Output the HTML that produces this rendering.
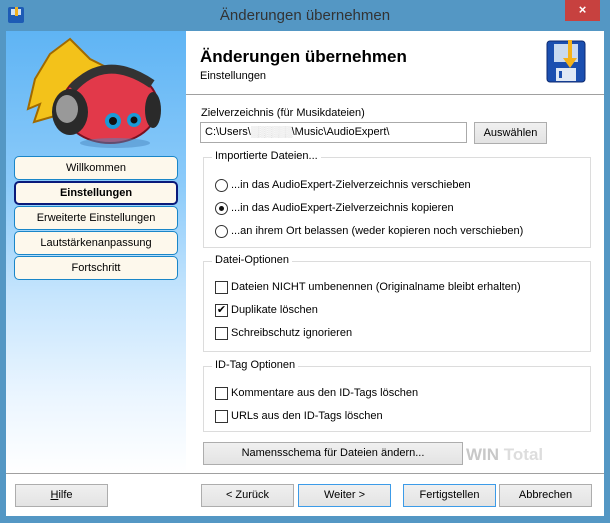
<!DOCTYPE html>
<html><head><meta charset="utf-8"><style>
*{margin:0;padding:0;box-sizing:border-box}
body{width:610px;height:523px;overflow:hidden;background:#5497c4;font-family:"Liberation Sans",sans-serif;font-size:11px;color:#000;position:relative}
.a{position:absolute}
.btn{position:absolute;background:linear-gradient(#f0f0f0,#e3e3e3);border:1px solid #adadad;text-align:center;font-size:11px;line-height:20px}
.nav{position:absolute;left:14px;width:164px;height:24px;background:#fdf8ec;border:1px solid #1a86c8;border-radius:5px;text-align:center;line-height:22px;font-size:11px}
.grp{position:absolute;left:203px;width:388px;border:1px solid #dcdcdc}
.grp .t{position:absolute;left:8px;top:-8px;background:#fff;padding:0 3px}
.rb{position:absolute;width:13px;height:13px;border:1px solid #333;border-radius:50%;background:#fff}
.cb{position:absolute;width:13px;height:13px;border:1px solid #333;background:#fff}
.lab{position:absolute;white-space:nowrap}
</style></head><body>
<div class="a" style="left:8px;top:7px;width:16px;height:16px;background:#1d5bb5;border-radius:2px"><div class="a" style="left:3px;top:2px;width:10px;height:6px;background:#cfe0f5"></div><div class="a" style="left:7px;top:0;width:3px;height:9px;background:#f0b020"></div></div>
<div class="a" style="left:0;top:7px;width:610px;text-align:center;font-size:15px;color:#333">Änderungen übernehmen</div>
<div class="a" style="left:565px;top:0;width:35px;height:21px;background:#c7413f;color:#fff;text-align:center;font-size:13px;line-height:20px;font-weight:bold">×</div>
<div class="a" style="left:6px;top:31px;width:598px;height:485px;background:#fff"></div>
<div class="a" style="left:6px;top:31px;width:180px;height:442px;background:linear-gradient(#5fb4f4 0%,#8ccbfa 35%,#c6e5fd 60%,#eaf5ff 82%,#fff 100%)"></div>
<svg class="a" style="left:20px;top:34px" width="150" height="115" viewBox="0 0 150 115">
<path d="M50 5 L30 20 L15 45 L8 75 L20 70 L14 88 L35 82 L55 60 L75 45 L90 35 L70 25 Z" fill="#f3c21a" stroke="#a06a00" stroke-width="2"/>
<ellipse cx="90" cy="72" rx="48" ry="37" fill="#e2394a" stroke="#7a1020" stroke-width="2"/>
<path d="M52 55 Q85 18 132 50" fill="none" stroke="#333" stroke-width="9"/>
<ellipse cx="50" cy="78" rx="18" ry="23" fill="#2a2a2a"/><ellipse cx="47" cy="75" rx="11" ry="14" fill="#999"/>
<ellipse cx="133" cy="76" rx="8" ry="18" fill="#2a2a2a"/>
<circle cx="93" cy="87" r="8" fill="#1a9ad6"/><circle cx="114" cy="86" r="7" fill="#1a9ad6"/>
<circle cx="93" cy="87" r="4" fill="#111"/><circle cx="114" cy="86" r="3.5" fill="#111"/>
<ellipse cx="95" cy="109" rx="35" ry="5" fill="#4a87c0" opacity=".5"/>
</svg>
<div class="nav" style="top:156px">Willkommen</div>
<div class="nav" style="top:181px;border:2px solid #0a1a7a;font-weight:bold;line-height:20px">Einstellungen</div>
<div class="nav" style="top:206px">Erweiterte Einstellungen</div>
<div class="nav" style="top:231px">Lautstärkenanpassung</div>
<div class="nav" style="top:256px">Fortschritt</div>
<div class="a" style="left:200px;top:47px;font-size:17px;font-weight:bold">Änderungen übernehmen</div>
<div class="a" style="left:200px;top:70px">Einstellungen</div>
<svg class="a" style="left:546px;top:40px" width="40" height="43" viewBox="0 0 40 43">
<rect x="1" y="1" width="38" height="41" rx="3" fill="#1b4fb0" stroke="#0c2a70"/>
<rect x="8" y="4" width="24" height="18" fill="#c9daf0"/>
<rect x="10" y="28" width="20" height="13" fill="#dfe8f5"/><rect x="13" y="31" width="3" height="7" fill="#1b4fb0"/>
<rect x="22" y="0" width="4" height="20" fill="#f4b21a"/><path d="M17 18 L31 18 L24 28 Z" fill="#f4b21a"/>
</svg>
<div class="a" style="left:186px;top:94px;width:418px;height:1px;background:#a0a0a0"></div>
<div class="lab" style="left:201px;top:107px">Zielverzeichnis (für Musikdateien)</div>
<div class="a" style="left:200px;top:122px;width:267px;height:21px;border:1px solid #aaa;padding:3px 4px;white-space:nowrap">C:\Users\<span style="color:#ccc;letter-spacing:-1px">▒▒▒▒▒▒</span>\Music\AudioExpert\</div>
<div class="btn" style="left:474px;top:122px;width:73px;height:22px">Auswählen</div>
<div class="grp" style="top:157px;height:91px"><div class="t">Importierte Dateien...</div></div>
<div class="rb" style="left:215px;top:179px"></div><div class="lab" style="left:231px;top:179px">...in das AudioExpert-Zielverzeichnis verschieben</div>
<div class="rb" style="left:215px;top:202px"><div class="a" style="left:3px;top:3px;width:5px;height:5px;border-radius:50%;background:#111"></div></div><div class="lab" style="left:231px;top:202px">...in das AudioExpert-Zielverzeichnis kopieren</div>
<div class="rb" style="left:215px;top:225px"></div><div class="lab" style="left:231px;top:225px">...an ihrem Ort belassen (weder kopieren noch verschieben)</div>
<div class="grp" style="top:261px;height:91px"><div class="t">Datei-Optionen</div></div>
<div class="cb" style="left:215px;top:281px"></div><div class="lab" style="left:231px;top:281px">Dateien NICHT umbenennen (Originalname bleibt erhalten)</div>
<div class="cb" style="left:215px;top:304px;font-size:11px;line-height:11px;text-align:center">✔</div><div class="lab" style="left:231px;top:304px">Duplikate löschen</div>
<div class="cb" style="left:215px;top:327px"></div><div class="lab" style="left:231px;top:327px">Schreibschutz ignorieren</div>
<div class="grp" style="top:366px;height:66px"><div class="t">ID-Tag Optionen</div></div>
<div class="cb" style="left:215px;top:387px"></div><div class="lab" style="left:231px;top:387px">Kommentare aus den ID-Tags löschen</div>
<div class="cb" style="left:215px;top:410px"></div><div class="lab" style="left:231px;top:410px">URLs aus den ID-Tags löschen</div>
<div class="btn" style="left:203px;top:442px;width:260px;height:23px">Namensschema für Dateien ändern...</div>
<div class="lab" style="left:466px;top:445px;font-size:17px;font-weight:bold;color:#c8c8c8">WIN <span style="color:#ddd">Total</span></div>
<div class="a" style="left:6px;top:473px;width:598px;height:1px;background:#a0a0a0"></div>
<div class="btn" style="left:15px;top:484px;width:93px;height:23px"><u>H</u>ilfe</div>
<div class="btn" style="left:201px;top:484px;width:93px;height:23px">&lt; Zurück</div>
<div class="btn" style="left:298px;top:484px;width:93px;height:23px;border-color:#3c9be8">Weiter &gt;</div>
<div class="btn" style="left:403px;top:484px;width:93px;height:23px;border-color:#3c9be8">Fertigstellen</div>
<div class="btn" style="left:499px;top:484px;width:93px;height:23px">Abbrechen</div>
</body></html>
